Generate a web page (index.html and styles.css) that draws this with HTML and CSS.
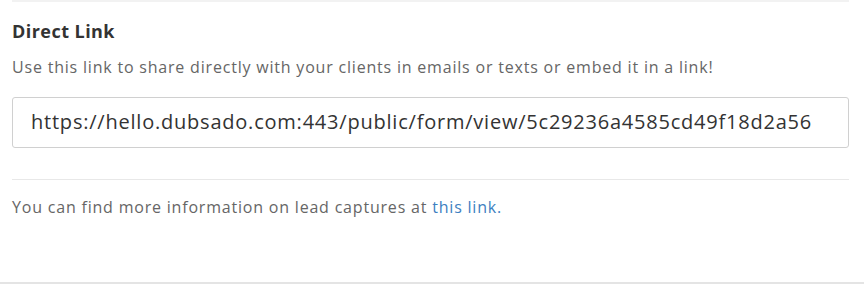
FILE: index.html
```html
<!DOCTYPE html>
<html>
<head>
<meta charset="utf-8">
<link rel="stylesheet" href="styles.css">
</head>
<body>
<div class="page">
  <div class="section">
    <div class="rule"></div>
    <h3 class="title">Direct Link</h3>
    <p class="desc">Use this link to share directly with your clients in emails or texts or embed it in a link!</p>
    <input class="url" type="text" value="https://hello.dubsado.com:443/public/form/view/5c29236a4585cd49f18d2a56" readonly>
    <div class="rule mid"></div>
    <p class="info">You can find more information on lead captures at <a href="#" class="link">this link.</a></p>
  </div>
  <div class="bottom"></div>
</div>
</body>
</html>
```
FILE: styles.css
```css
html, body {
  margin: 0;
  padding: 0;
  background: #fff;
}
.page {
  width: 864px;
  height: 297px;
  display: flex;
  flex-direction: column;
  font-family: "Open Sans", "Liberation Sans", sans-serif;
}
.section {
  padding: 0 15px 0 12px;
  height: 282px;
  box-sizing: border-box;
}
.rule {
  height: 2px;
  background: #f2f2f2;
}
.title {
  margin: 17px 0 0 0;
  font-size: 18px;
  font-weight: 700;
  letter-spacing: 0.45px;
  color: #333;
  line-height: 24px;
}
.desc {
  margin: 14px 0 0 0;
  font-size: 16px;
  letter-spacing: 0.8px;
  color: #666;
  line-height: 21px;
}
.url {
  display: block;
  margin: 19px 0 0 0;
  width: 100%;
  box-sizing: border-box;
  height: 51px;
  border: 1px solid #d0d0d0;
  border-radius: 3px;
  padding: 0 18px 2px 18px;
  font-family: inherit;
  font-size: 20px;
  letter-spacing: 0.78px;
  color: #333;
  background: #fff;
  outline: none;
}
.mid {
  margin-top: 31px;
  height: 1px;
  background: #e8e8e8;
}
.info {
  margin: 17px 0 0 0;
  font-size: 16px;
  letter-spacing: 0.8px;
  color: #666;
  line-height: 21px;
}
.link {
  color: #3d7fc1;
  text-decoration: none;
}
.bottom {
  height: 2px;
  background: #e4e4e4;
}
```
